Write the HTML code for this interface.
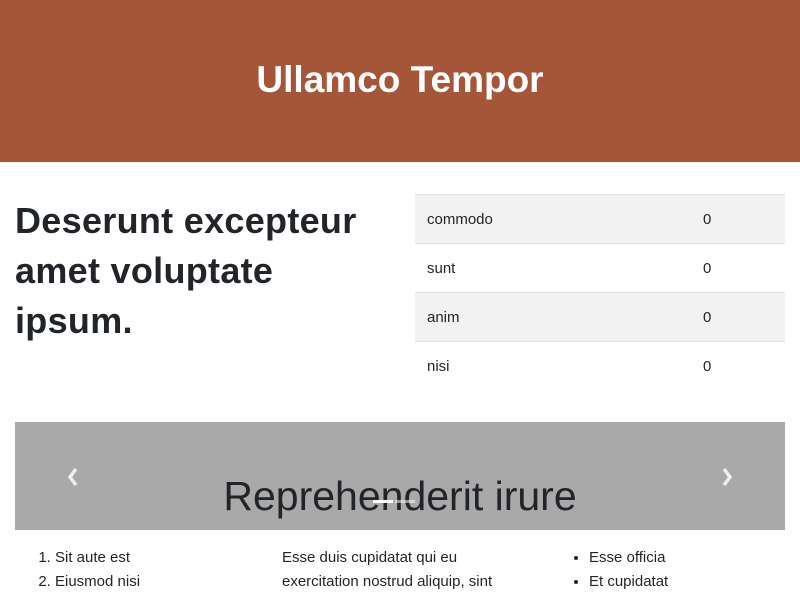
<!DOCTYPE html>
<html><head><style>
body{margin:0;width:800px;height:600px;overflow:hidden;font-family:"Liberation Sans",sans-serif;color:#212529;background:#fff}
.hdr{position:absolute;left:0;top:0;width:800px;height:162px;background:#a65638}
.hdr h1{margin:0;position:absolute;top:56px;width:100%;text-align:center;color:#fff;font-size:37px;font-weight:bold;line-height:48px}
.h2{position:absolute;left:15px;top:196px;font-size:36px;line-height:50px;font-weight:bold;margin:0;width:370px;letter-spacing:0.3px}
table{position:absolute;left:415px;top:194px;width:370px;border-collapse:collapse;font-size:15px}
td{height:48px;border-top:1px solid #dee2e6;padding:0 12px;vertical-align:middle}
tr:nth-child(odd) td{background:#f2f2f2}
td:last-child{width:70px}
.car{position:absolute;left:15px;top:422px;width:770px;height:108px;background:#a9a9a9;overflow:hidden}
.car h3{position:absolute;top:50px;width:100%;text-align:center;margin:0;font-size:41px;font-weight:normal;line-height:48px;color:#212529}
.arr{position:absolute;top:45px}
.ind{position:absolute;top:78px;height:3px;width:20px}
.col{position:absolute;top:546px;font-size:15px;line-height:24px}
ol,ul{margin:0;padding:0}
</style></head><body>
<div class="hdr"><h1>Ullamco Tempor</h1></div>
<h2 class="h2">Deserunt excepteur amet voluptate ipsum.</h2>
<table>
<tr><td>commodo</td><td>0</td></tr>
<tr><td>sunt</td><td>0</td></tr>
<tr><td>anim</td><td>0</td></tr>
<tr><td>nisi</td><td>0</td></tr>
</table>
<div class="car">
<svg class="arr" style="left:51px" width="14" height="20" viewBox="0 0 14 20"><path d="M10 2 L4 10 L10 18" fill="none" stroke="#eee" stroke-width="3.5"/></svg>
<svg class="arr" style="left:705px" width="14" height="20" viewBox="0 0 14 20"><path d="M4 2 L10 10 L4 18" fill="none" stroke="#eee" stroke-width="3.5"/></svg>
<h3>Reprehenderit irure</h3>
<div class="ind" style="left:358px;background:#fff"></div>
<div class="ind" style="left:380px;background:#fff;opacity:.5"></div>
</div>
<div class="col" style="left:39px"><ol style="padding-left:16px"><li>Sit aute est</li><li>Eiusmod nisi</li></ol></div>
<div class="col" style="left:282px;width:250px">Esse duis cupidatat qui eu exercitation nostrud aliquip, sint</div>
<div class="col" style="left:569px"><ul style="padding-left:20px"><li>Esse officia</li><li>Et cupidatat</li></ul></div>
</body></html>
